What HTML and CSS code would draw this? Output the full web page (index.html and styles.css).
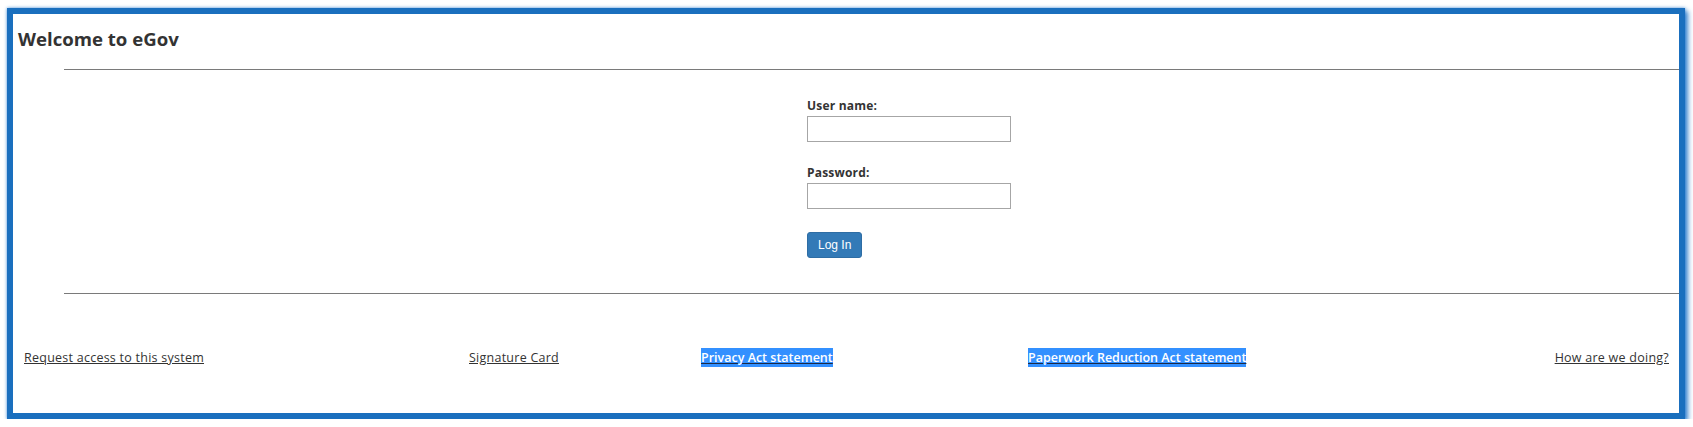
FILE: index.html
```html
<!DOCTYPE html>
<html lang="en">
<head>
<meta charset="utf-8">
<title>Welcome to eGov</title>
<link rel="stylesheet" href="styles.css">
</head>
<body>
<div class="frame">
  <h1 class="title">Welcome to eGov</h1>
  <hr class="rule">
  <form class="login">
    <label class="field-label" for="user">User name:</label>
    <input class="field" id="user" type="text">
    <label class="field-label second" for="pass">Password:</label>
    <input class="field" id="pass" type="password">
    <button class="btn" type="button">Log In</button>
  </form>
  <hr class="rule rule-bottom">
  <div class="footer">
    <a class="flink" href="#">Request access to this system</a>
    <a class="flink" href="#">Signature Card</a>
    <a class="flink sel" href="#">Privacy Act statement</a>
    <a class="flink sel" href="#">Paperwork Reduction Act statement</a>
    <a class="flink last" href="#">How are we doing?</a>
  </div>
</div>
</body>
</html>
```
FILE: styles.css
```css
html, body {
  margin: 0;
  padding: 0;
  background: #ffffff;
}

body {
  font-family: "Open Sans", "Noto Sans", sans-serif;
  color: #333333;
}

.frame {
  margin: 8px 8px 0 7px;
  height: 399px;
  border: 6px solid #1a6fbe;
  box-shadow: 0 0 3px rgba(40, 125, 210, 0.75), 3px 3px 5px rgba(30, 115, 200, 0.85);
  background: #ffffff;
  display: flex;
  flex-direction: column;
}

.title {
  margin: 13px 0 0 5px;
  font-size: 18.6px;
  line-height: 24px;
  font-weight: 700;
  color: #333333;
}

.rule {
  margin: 18px 0 0 51px;
  border: 0;
  border-top: 1px solid #7a7a7a;
  height: 0;
}

.login {
  margin: 28px 0 0 794px;
  display: flex;
  flex-direction: column;
  align-items: flex-start;
}

.field-label {
  font-size: 12px;
  line-height: 16px;
  font-weight: 700;
  color: #333333;
  margin-bottom: 2px;
  letter-spacing: 0.2px;
}

.field-label.second {
  margin-top: 23px;
}

.field {
  box-sizing: border-box;
  width: 204px;
  height: 26px;
  border: 1px solid #a6a6a6;
  margin: 0;
  padding: 2px 4px;
  background: #ffffff;
}

.btn {
  margin-top: 23px;
  box-sizing: border-box;
  height: 26px;
  padding: 0 10px;
  background: #337ab7;
  border: 1px solid #2e6da4;
  border-radius: 3px;
  color: #ffffff;
  font-family: "Liberation Sans", Arial, sans-serif;
  font-size: 12px;
  line-height: 24px;
}

.rule-bottom {
  margin-top: 35px;
}

.footer {
  margin-top: 54px;
  padding: 0 10px 0 11px;
  display: grid;
  grid-template-columns: 445px 232px 327px 1fr auto;
  align-items: start;
}

.flink {
  justify-self: start;
  font-size: 12.5px;
  line-height: 19px;
  letter-spacing: 0.25px;
  color: #333333;
  text-decoration: underline;
  text-decoration-color: #333333;
}

.flink.sel {
  background: #3390ff;
  color: #ffffff;
  font-weight: 600;
  letter-spacing: 0;
  text-decoration-color: #1c2a44;
}

.flink.last {
  justify-self: end;
}
```
